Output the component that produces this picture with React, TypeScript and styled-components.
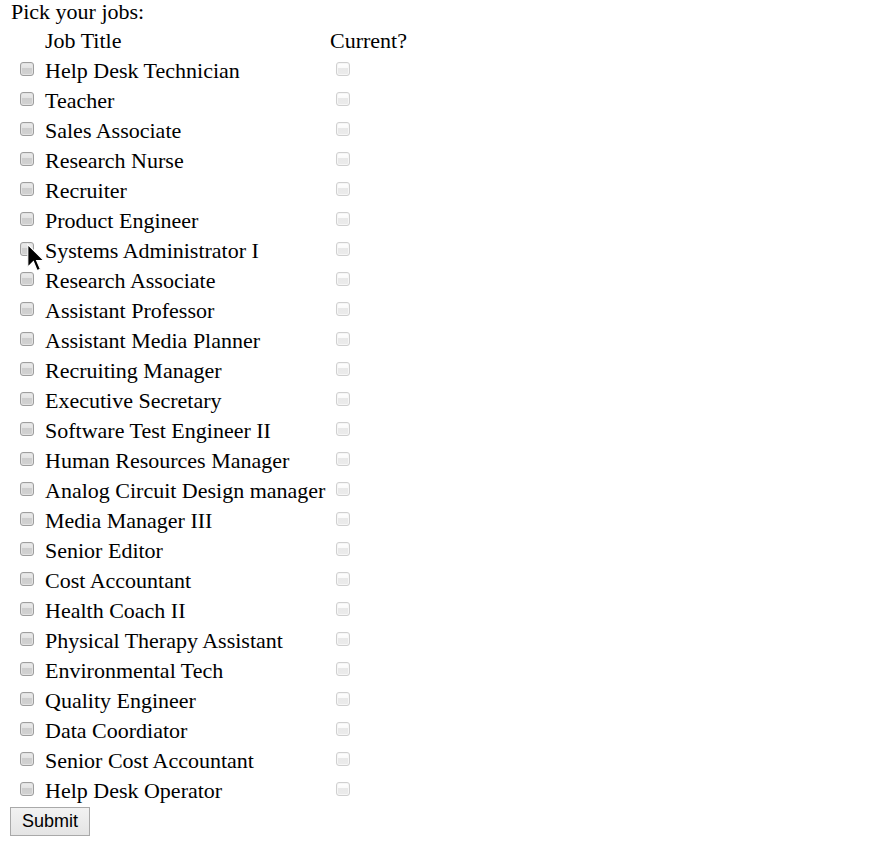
import React from "react";
import styled, { createGlobalStyle } from "styled-components";

const Global = createGlobalStyle`
  html, body { margin: 0; padding: 0; background: #ffffff; }
  body { font-family: "Liberation Serif", "Times New Roman", serif; color: #000; }
`;

const Page = styled.form`
  position: relative;
  padding: 0 0 0 11px;
  font-size: 22px;
`;

const Title = styled.div`
  line-height: 23px;
  height: 23px;
`;

const Grid = styled.div`
  margin-top: 3px;
  display: grid;
  grid-template-columns: 34px 285px 40px;
  grid-auto-rows: 30px;
`;

const Cell = styled.div`
  line-height: 30px;
  white-space: nowrap;
`;

const HeaderCell = styled(Cell)``;

const BoxCell = styled.div<{ $left: number }>`
  padding-left: ${(p) => p.$left}px;
  padding-top: 6px;
`;

const Box = styled.span<{ $disabled?: boolean }>`
  display: block;
  box-sizing: border-box;
  width: 14px;
  height: 14px;
  border-radius: 3px;
  border: 1px solid ${(p) => (p.$disabled ? "#d0d0d0" : "#9e9e9e")};
  background: ${(p) =>
    p.$disabled
      ? "linear-gradient(#ffffff 0%, #fbfbfb 38%, #e9e9e9 42%, #ebebeb 100%)"
      : "linear-gradient(#ececec 0%, #e4e4e4 38%, #cdcdcd 42%, #d3d3d3 100%)"};
  box-shadow: inset 0 0 0 1px ${(p) => (p.$disabled ? "#f6f6f6" : "#e2e2e2")};
`;

const Submit = styled.button`
  display: block;
  box-sizing: border-box;
  margin: 1px 0 0 -1px;
  width: 80px;
  height: 29px;
  padding: 0;
  font-family: "Liberation Sans", Arial, sans-serif;
  font-size: 18px;
  color: #000;
  border: 1px solid #a9a9a9;
  border-radius: 0;
  background: linear-gradient(#f2f2f2, #e4e4e4);
`;

const Cursor = styled.svg`
  position: absolute;
  left: 27px;
  top: 244px;
  width: 17px;
  height: 28px;
  overflow: visible;
`;

const jobs = [
  "Help Desk Technician",
  "Teacher",
  "Sales Associate",
  "Research Nurse",
  "Recruiter",
  "Product Engineer",
  "Systems Administrator I",
  "Research Associate",
  "Assistant Professor",
  "Assistant Media Planner",
  "Recruiting Manager",
  "Executive Secretary",
  "Software Test Engineer II",
  "Human Resources Manager",
  "Analog Circuit Design manager",
  "Media Manager III",
  "Senior Editor",
  "Cost Accountant",
  "Health Coach II",
  "Physical Therapy Assistant",
  "Environmental Tech",
  "Quality Engineer",
  "Data Coordiator",
  "Senior Cost Accountant",
  "Help Desk Operator",
];

export default function App() {
  return (
    <>
      <Global />
      <Page onSubmit={(e) => e.preventDefault()}>
        <Title>Pick your jobs:</Title>
        <Grid>
          <Cell />
          <HeaderCell>Job Title</HeaderCell>
          <HeaderCell>Current?</HeaderCell>
          {jobs.map((j) => (
            <React.Fragment key={j}>
              <BoxCell $left={9}>
                <Box role="checkbox" aria-checked="false" />
              </BoxCell>
              <Cell>{j}</Cell>
              <BoxCell $left={6}>
                <Box $disabled role="checkbox" aria-disabled="true" />
              </BoxCell>
            </React.Fragment>
          ))}
        </Grid>
        <Submit type="submit">Submit</Submit>
        <Cursor viewBox="0 0 12 20">
          <path
            d="M0.5 0.5 L0.5 16.5 L4.5 12.5 L7.2 19 L9.5 18 L6.8 11.8 L12 11.8 Z"
            fill="#000"
            stroke="#fff"
            strokeWidth="0.8"
            strokeLinejoin="miter"
          />
        </Cursor>
      </Page>
    </>
  );
}
